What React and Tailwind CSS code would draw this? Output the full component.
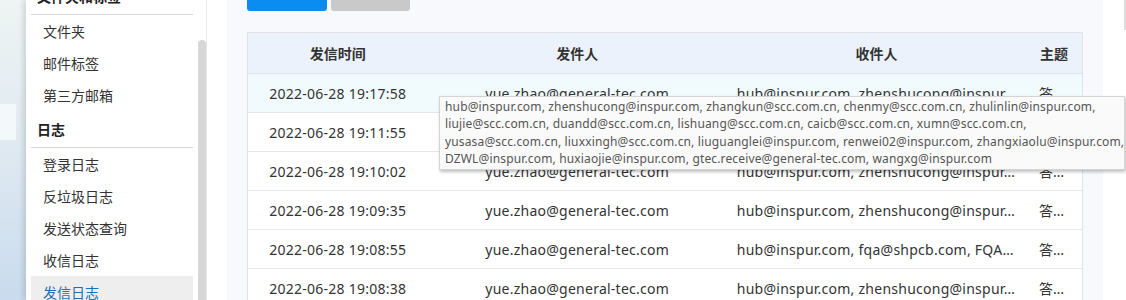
import React from "react";

const rows = [
  { t: "2022-06-28 19:17:58", to: "hub@inspur.com, zhenshucong@inspur.com, zhangkun@scc.com.cn", hover: true },
  { t: "2022-06-28 19:11:55", to: "hub@inspur.com, zhenshucong@inspur.com, zhangkun@scc.com.cn" },
  { t: "2022-06-28 19:10:02", to: "hub@inspur.com, zhenshucong@inspur.com, zhangkun@scc.com.cn" },
  { t: "2022-06-28 19:09:35", to: "hub@inspur.com, zhenshucong@inspur.com, zhangkun@scc.com.cn" },
  { t: "2022-06-28 19:08:55", to: "hub@inspur.com, fqa@shpcb.com, FQA@shpcb.com, zhangkun@scc.com.cn" },
  { t: "2022-06-28 19:08:38", to: "hub@inspur.com, zhenshucong@inspur.com, zhangkun@scc.com.cn" },
];

const tipLines = [
  "hub@inspur.com, zhenshucong@inspur.com, zhangkun@scc.com.cn, chenmy@scc.com.cn, zhulinlin@inspur.com,",
  "liujie@scc.com.cn, duandd@scc.com.cn, lishuang@scc.com.cn, caicb@scc.com.cn, xumn@scc.com.cn,",
  "yusasa@scc.com.cn, liuxxingh@scc.com.cn, liuguanglei@inspur.com, renwei02@inspur.com, zhangxiaolu@inspur.com,",
  "DZWL@inspur.com, huxiaojie@inspur.com, gtec.receive@general-tec.com, wangxg@inspur.com",
];

function NavItem({ children, active }) {
  return (
    <div
      className={
        "h-[32px] flex items-center pl-[12px] text-[14px] " +
        (active ? "bg-[#eeeeee] text-[#1f6db3]" : "text-[#333333]")
      }
    >
      {children}
    </div>
  );
}

function NavHeader({ children }) {
  return (
    <div className="h-[37px] flex items-center pl-[6px] text-[14px] font-bold text-[#222222] border-b border-[#d9d9d9]">
      {children}
    </div>
  );
}

export default function App() {
  return (
    <div className="relative w-[1126px] h-[300px] overflow-hidden flex bg-white font-['Noto_Sans','Noto_Sans_CJK_SC',sans-serif]">
      {/* background strip */}
      <div className="w-[26px] h-full bg-gradient-to-b from-[#edf4f3] via-[#dfe9f1] to-[#c9dbee] flex flex-col pt-[104px]">
        <div className="w-[16px] h-[36px] bg-[#f3f9fb]" />
      </div>

      {/* sidebar */}
      <div className="w-[172px] h-full bg-white shadow-[-3px_0_5px_rgba(0,0,0,0.12)] px-[5px]">
        <div className="-mt-[22px]">
          <NavHeader>文件夹和标签</NavHeader>
          <NavItem>文件夹</NavItem>
          <NavItem>邮件标签</NavItem>
          <NavItem>第三方邮箱</NavItem>
          <NavHeader>日志</NavHeader>
          <NavItem>登录日志</NavItem>
          <NavItem>反垃圾日志</NavItem>
          <NavItem>发送状态查询</NavItem>
          <NavItem>收信日志</NavItem>
          <NavItem active>发信日志</NavItem>
        </div>
      </div>

      {/* sidebar scrollbar */}
      <div className="w-[8px] h-full flex flex-col bg-white">
        <div className="h-[40px]" />
        <div className="flex-1 bg-[#d7d7d7] rounded-t-[4px]" />
      </div>
      <div className="w-[1px] h-full bg-[#e6e6e6]" />
      <div className="w-[20px] h-full bg-white" />

      {/* main */}
      <div className="w-[876px] h-full bg-[#f8f9fc] pl-[20px]">
        <div className="flex gap-[4px] -mt-[21px] h-[32px]">
          <div className="w-[80px] h-[32px] bg-[#0a8cf0] rounded-[3px]" />
          <div className="w-[79px] h-[32px] bg-[#c9c9c9] rounded-[3px]" />
        </div>
        <div className="mt-[21px] w-[836px] border border-[#e2e4e8] bg-white text-[14px] text-[#333333]">
          <div className="flex h-[41px] items-center bg-[#ebf2fb] border-b border-[#e2e4e8] font-bold text-[#333333]">
            <div className="w-[180px] text-center">发信时间</div>
            <div className="w-[300px] text-center">发件人</div>
            <div className="w-[300px] text-center">收件人</div>
            <div className="w-[56px] text-center">主题</div>
          </div>
          {rows.map((r, i) => (
            <div
              key={i}
              className={
                "flex h-[39px] items-center border-b border-[#e6e6e6] tracking-[0.25px] " +
                (r.hover ? "bg-[#f1fbfd]" : "bg-white")
              }
            >
              <div className="w-[180px] text-center">{r.t}</div>
              <div className="w-[300px] text-center truncate px-[10px]">yue.zhao@general-tec.com</div>
              <div className="w-[300px] text-center truncate px-[10px]">{r.to}</div>
              <div className="w-[56px] text-center truncate pl-[13px] pr-[8px] tracking-normal">答复：会议通知</div>
            </div>
          ))}
        </div>
      </div>

      {/* right strip */}
      <div className="w-[23px] h-full bg-white flex justify-end">
        <div className="w-[2px] h-[30px] bg-[#dcdcdc]" />
      </div>

      {/* tooltip */}
      <div className="absolute left-[439px] top-[96px] w-[686px] bg-[#fafafa] border border-[#d4d4d4] shadow-[1px_2px_3px_rgba(0,0,0,0.25)] px-[5px] py-[1px] text-[12px] leading-[17.4px] tracking-[0.15px] text-[#555555] whitespace-nowrap">
        {tipLines.map((l, i) => (
          <div key={i}>{l}</div>
        ))}
      </div>
    </div>
  );
}
